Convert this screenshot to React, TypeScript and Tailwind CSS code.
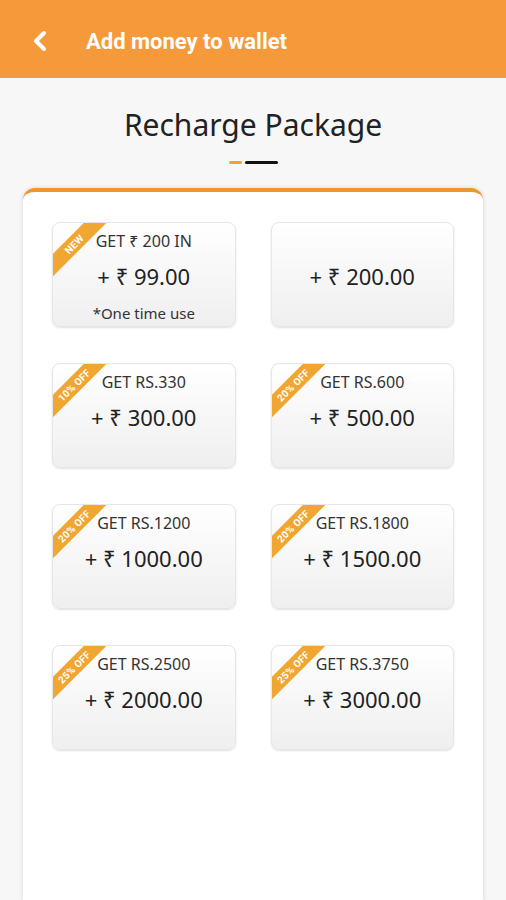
import { ChevronLeft } from 'lucide-react'

type Pack = { get?: string; amount: string; tag?: string; note?: string }

const packs: Pack[] = [
  { get: 'GET ₹ 200 IN', amount: '+ ₹ 99.00', tag: 'NEW', note: '*One time use' },
  { amount: '+ ₹ 200.00' },
  { get: 'GET RS.330', amount: '+ ₹ 300.00', tag: '10% OFF' },
  { get: 'GET RS.600', amount: '+ ₹ 500.00', tag: '20% OFF' },
  { get: 'GET RS.1200', amount: '+ ₹ 1000.00', tag: '20% OFF' },
  { get: 'GET RS.1800', amount: '+ ₹ 1500.00', tag: '20% OFF' },
  { get: 'GET RS.2500', amount: '+ ₹ 2000.00', tag: '25% OFF' },
  { get: 'GET RS.3750', amount: '+ ₹ 3000.00', tag: '25% OFF' },
]

function PackTile({ pack }: { pack: Pack }) {
  return (
    <div className="relative h-[105px] overflow-hidden rounded-lg border border-[#e6e6e6] bg-gradient-to-b from-white to-[#efefef] shadow-[0_1px_2px_rgba(0,0,0,0.12)]">
      {pack.tag && (
        <div className="absolute left-[-24px] top-[13px] flex h-[16px] w-[90px] -rotate-45 items-center justify-center bg-[#f1a631] text-[10px] font-bold tracking-wide text-white">
          {pack.tag}
        </div>
      )}
      <div className="flex h-full flex-col items-center font-['Noto_Sans',sans-serif] text-[#333]">
        <div className="mt-[7px] h-[22px] text-[16px] leading-[22px]">{pack.get}</div>
        <div className="mt-[9px] h-[30px] text-[22px] leading-[30px] text-[#222]">{pack.amount}</div>
        <div className="mt-[11px] h-[22px] text-[15px] leading-[22px]">{pack.note}</div>
      </div>
    </div>
  )
}

export default function App() {
  return (
    <div className="flex h-[900px] flex-col overflow-hidden bg-[#f7f7f7] font-['Roboto','Noto_Sans',sans-serif]">
      <header className="flex h-[78px] shrink-0 items-center bg-[#f5993a] px-6 pt-1 text-white">
        <ChevronLeft className="h-8 w-8" strokeWidth={3} />
        <h1 className="ml-[30px] text-[22px] font-bold">Add money to wallet</h1>
      </header>

      <h2 className="mt-[27px] text-center font-['Noto_Sans',sans-serif] text-[30px] leading-10 text-[#222]">
        Recharge Package
      </h2>
      <div className="mt-[16px] flex justify-center gap-[3px]">
        <span className="h-[3px] w-[13px] rounded-full bg-[#f0a233]" />
        <span className="h-[3px] w-[33px] rounded-full bg-[#111]" />
      </div>

      <div className="mx-[23px] mt-[24px] flex-1 rounded-t-xl border-t-4 border-[#ee9530] bg-white px-[29px] pt-[30px] shadow-[0_0_4px_rgba(0,0,0,0.15)]">
        <div className="grid grid-cols-2 gap-x-[35px] gap-y-9">
          {packs.map((p, i) => (
            <PackTile key={i} pack={p} />
          ))}
        </div>
      </div>
    </div>
  )
}
